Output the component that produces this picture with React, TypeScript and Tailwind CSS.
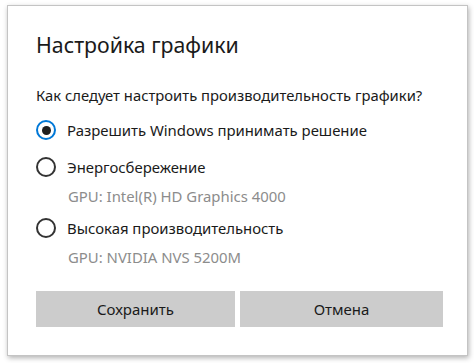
const options = [
  { label: "Разрешить Windows принимать решение", checked: true },
  { label: "Энергосбережение", gpu: "GPU: Intel(R) HD Graphics 4000" },
  { label: "Высокая производительность", gpu: "GPU: NVIDIA NVS 5200M" },
];

function Radio({ checked }: { checked?: boolean }) {
  if (checked) {
    return (
      <div className="w-[20px] h-[20px] rounded-full border-2 border-[#0078d7] flex items-center justify-center flex-shrink-0">
        <div className="w-[9px] h-[9px] rounded-full bg-[#1f1f1f]" />
      </div>
    );
  }
  return <div className="w-[20px] h-[20px] rounded-full border-2 border-[#333333] flex-shrink-0" />;
}

export default function App() {
  return (
    <div className="w-[474px] h-[363px] bg-white pt-[5px] pl-[7px] font-['Noto_Sans',sans-serif]">
      <div className="w-[461px] h-[351px] bg-white border border-[#c4c4c4] shadow-[1px_2px_5px_rgba(0,0,0,0.3)] pl-[28px] pr-[24px] pt-[24px]">
        {/* Title */}
        <h1 className="text-[21.3px] leading-[30px] text-[#1a1a1a]">Настройка графики</h1>

        <p className="mt-[25px] text-[14.8px] leading-[20px] text-[#1a1a1a]">
          Как следует настроить производительность графики?
        </p>

        {/* Options */}
        <div className="mt-[13px] flex flex-col">
          {options.map((opt, i) => (
            <div key={opt.label} className={i === 0 ? "" : i === 1 ? "mt-[13px]" : "mt-[10px]"}>
              <div className="flex items-center gap-[11px] h-[24px]">
                <Radio checked={opt.checked} />
                <span className="text-[14.9px] text-[#1a1a1a]">{opt.label}</span>
              </div>
              {opt.gpu && (
                <div className="mt-[7px] pl-[32px] text-[14.9px] leading-[20px] text-[#8c8c8c]">{opt.gpu}</div>
              )}
            </div>
          ))}
        </div>

        {/* Buttons */}
        <div className="mt-[24px] flex gap-[5px]">
          <button className="w-[199px] h-[36px] bg-[#cccccc] text-[15px] text-[#1a1a1a]">Сохранить</button>
          <button className="w-[203px] h-[36px] bg-[#cccccc] text-[15px] text-[#1a1a1a]">Отмена</button>
        </div>
      </div>
    </div>
  );
}
